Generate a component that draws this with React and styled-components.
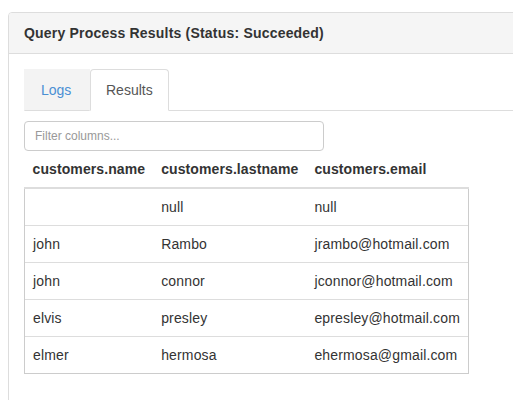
import React from "react";
import styled, { createGlobalStyle } from "styled-components";

const Global = createGlobalStyle`
  html, body { margin: 0; padding: 0; background: #fff; overflow: hidden; }
  body { padding: 12px 0 0 8px; font-family: "Liberation Sans", Arial, sans-serif; font-size: 14px; color: #333; }
  * { box-sizing: border-box; }
`;

const Panel = styled.div`
  width: 620px;
  min-height: 420px;
  border: 1px solid #ddd;
  border-radius: 4px;
  background: #fff;
`;

const PanelHeading = styled.div`
  background: #f5f5f5;
  border-bottom: 1px solid #ddd;
  padding: 10px 15px;
  border-radius: 3px 3px 0 0;
`;

const PanelTitle = styled.h3`
  margin: 0;
  font-size: 14px;
  font-weight: bold;
  line-height: 20px;
  color: #333;
  letter-spacing: 0.2px;
`;

const PanelBody = styled.div`
  padding: 15px;
`;

const Tabs = styled.ul`
  list-style: none;
  margin: 0;
  padding: 0;
  display: flex;
  border-bottom: 1px solid #ddd;
`;

const Tab = styled.li`
  margin-bottom: -1px;
  padding: 10px 15px;
  line-height: 20px;
  font-size: 14px;
  border: 1px solid ${(p) => (p.$active ? "#ddd" : "transparent")};
  border-bottom-color: ${(p) => (p.$active ? "transparent" : "#ddd")};
  border-radius: 4px 4px 0 0;
  background: ${(p) => (p.$active ? "#fff" : "#f3f3f3")};
  color: ${(p) => (p.$active ? "#555" : "#4a8fd3")};
  ${(p) => (!p.$active ? "border-radius: 0; width: 66px; padding-left: 16px;" : "")}
`;

const FilterInput = styled.input`
  display: block;
  margin-top: 10px;
  width: 300px;
  height: 30px;
  padding: 5px 10px;
  font-size: 12px;
  font-family: "Liberation Sans", Arial, sans-serif;
  color: #555;
  border: 1px solid #ccc;
  border-radius: 4px;
  outline: none;
  &::placeholder { color: #999; }
`;

const Table = styled.table`
  border-collapse: collapse;
  border-spacing: 0;
`;

const Th = styled.th`
  text-align: left;
  font-weight: bold;
  padding: 8px 8px;
  line-height: 20px;
  color: #333;
  letter-spacing: 0.1px;
  border-bottom: 2px solid #ddd;
`;

const Td = styled.td`
  padding: 8px 8px;
  line-height: 20px;
  color: #333;
  letter-spacing: 0.15px;
  border-top: 1px solid #ddd;
  &:first-child { border-left: 1px solid #ccc; }
  &:last-child { border-right: 1px solid #ccc; }
`;

const Row = styled.tr`
  &:last-child td { border-bottom: 1px solid #ccc; }
  &:first-child td { border-top: none; }
`;

const rows = [
  ["", "null", "null"],
  ["john", "Rambo", "jrambo@hotmail.com"],
  ["john", "connor", "jconnor@hotmail.com"],
  ["elvis", "presley", "epresley@hotmail.com"],
  ["elmer", "hermosa", "ehermosa@gmail.com"],
];

export default function App() {
  return (
    <>
      <Global />
      <Panel>
        <PanelHeading>
          <PanelTitle>Query Process Results (Status: Succeeded)</PanelTitle>
        </PanelHeading>
        <PanelBody>
          <Tabs>
            <Tab>Logs</Tab>
            <Tab $active>Results</Tab>
          </Tabs>
          <FilterInput placeholder="Filter columns..." />
          <Table>
            <thead>
              <tr>
                <Th>customers.name</Th>
                <Th>customers.lastname</Th>
                <Th>customers.email</Th>
              </tr>
            </thead>
            <tbody>
              {rows.map((r, i) => (
                <Row key={i}>
                  {r.map((c, j) => (
                    <Td key={j}>{c}</Td>
                  ))}
                </Row>
              ))}
            </tbody>
          </Table>
        </PanelBody>
      </Panel>
    </>
  );
}
